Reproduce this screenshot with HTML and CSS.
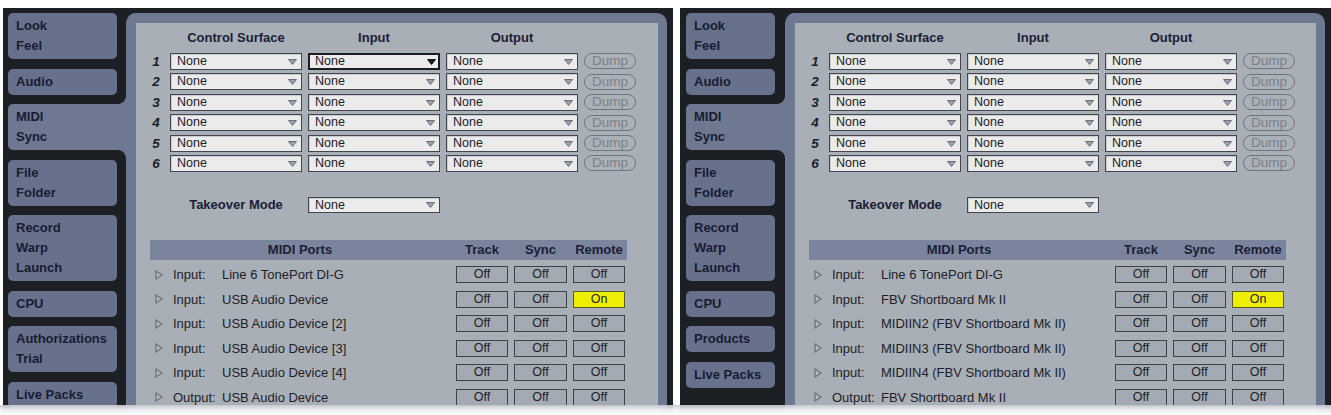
FILE: index.html
```html
<!DOCTYPE html>
<html>
<head>
<meta charset="utf-8">
<link rel="stylesheet" href="styles.css">
</head>
<body>
<div class="page">

  <div class="win win-a">
    <nav class="sidebar">
      <div class="tab"><span>Look</span><span>Feel</span></div>
      <div class="tab"><span>Audio</span></div>
      <div class="tab active"><span>MIDI</span><span>Sync</span></div>
      <div class="tab"><span>File</span><span>Folder</span></div>
      <div class="tab"><span>Record</span><span>Warp</span><span>Launch</span></div>
      <div class="tab"><span>CPU</span></div>
      <div class="tab"><span>Authorizations</span><span>Trial</span></div>
      <div class="tab"><span>Live Packs</span></div>
    </nav>
    <section class="main">
      <div class="matrix">
        <div class="colh c2">Control Surface</div>
        <div class="colh c3">Input</div>
        <div class="colh c4">Output</div>

        <div class="num">1</div>
        <div class="sel">None<svg width="9" height="6" viewBox="0 0 9 6"><polygon points="0.5,0.5 8.5,0.5 4.5,5.5" fill="#9ba1aa" stroke="#6a707a"/></svg></div>
        <div class="sel focus">None<svg width="9" height="6" viewBox="0 0 9 6"><polygon points="0.5,0.5 8.5,0.5 4.5,5.5" fill="#15171b" stroke="#15171b"/></svg></div>
        <div class="sel">None<svg width="9" height="6" viewBox="0 0 9 6"><polygon points="0.5,0.5 8.5,0.5 4.5,5.5" fill="#9ba1aa" stroke="#6a707a"/></svg></div>
        <div class="dump">Dump</div>

        <div class="num">2</div>
        <div class="sel">None<svg width="9" height="6" viewBox="0 0 9 6"><polygon points="0.5,0.5 8.5,0.5 4.5,5.5" fill="#9ba1aa" stroke="#6a707a"/></svg></div>
        <div class="sel">None<svg width="9" height="6" viewBox="0 0 9 6"><polygon points="0.5,0.5 8.5,0.5 4.5,5.5" fill="#9ba1aa" stroke="#6a707a"/></svg></div>
        <div class="sel">None<svg width="9" height="6" viewBox="0 0 9 6"><polygon points="0.5,0.5 8.5,0.5 4.5,5.5" fill="#9ba1aa" stroke="#6a707a"/></svg></div>
        <div class="dump">Dump</div>

        <div class="num">3</div>
        <div class="sel">None<svg width="9" height="6" viewBox="0 0 9 6"><polygon points="0.5,0.5 8.5,0.5 4.5,5.5" fill="#9ba1aa" stroke="#6a707a"/></svg></div>
        <div class="sel">None<svg width="9" height="6" viewBox="0 0 9 6"><polygon points="0.5,0.5 8.5,0.5 4.5,5.5" fill="#9ba1aa" stroke="#6a707a"/></svg></div>
        <div class="sel">None<svg width="9" height="6" viewBox="0 0 9 6"><polygon points="0.5,0.5 8.5,0.5 4.5,5.5" fill="#9ba1aa" stroke="#6a707a"/></svg></div>
        <div class="dump">Dump</div>

        <div class="num">4</div>
        <div class="sel">None<svg width="9" height="6" viewBox="0 0 9 6"><polygon points="0.5,0.5 8.5,0.5 4.5,5.5" fill="#9ba1aa" stroke="#6a707a"/></svg></div>
        <div class="sel">None<svg width="9" height="6" viewBox="0 0 9 6"><polygon points="0.5,0.5 8.5,0.5 4.5,5.5" fill="#9ba1aa" stroke="#6a707a"/></svg></div>
        <div class="sel">None<svg width="9" height="6" viewBox="0 0 9 6"><polygon points="0.5,0.5 8.5,0.5 4.5,5.5" fill="#9ba1aa" stroke="#6a707a"/></svg></div>
        <div class="dump">Dump</div>

        <div class="num">5</div>
        <div class="sel">None<svg width="9" height="6" viewBox="0 0 9 6"><polygon points="0.5,0.5 8.5,0.5 4.5,5.5" fill="#9ba1aa" stroke="#6a707a"/></svg></div>
        <div class="sel">None<svg width="9" height="6" viewBox="0 0 9 6"><polygon points="0.5,0.5 8.5,0.5 4.5,5.5" fill="#9ba1aa" stroke="#6a707a"/></svg></div>
        <div class="sel">None<svg width="9" height="6" viewBox="0 0 9 6"><polygon points="0.5,0.5 8.5,0.5 4.5,5.5" fill="#9ba1aa" stroke="#6a707a"/></svg></div>
        <div class="dump">Dump</div>

        <div class="num">6</div>
        <div class="sel">None<svg width="9" height="6" viewBox="0 0 9 6"><polygon points="0.5,0.5 8.5,0.5 4.5,5.5" fill="#9ba1aa" stroke="#6a707a"/></svg></div>
        <div class="sel">None<svg width="9" height="6" viewBox="0 0 9 6"><polygon points="0.5,0.5 8.5,0.5 4.5,5.5" fill="#9ba1aa" stroke="#6a707a"/></svg></div>
        <div class="sel">None<svg width="9" height="6" viewBox="0 0 9 6"><polygon points="0.5,0.5 8.5,0.5 4.5,5.5" fill="#9ba1aa" stroke="#6a707a"/></svg></div>
        <div class="dump">Dump</div>
      </div>

      <div class="takeover">
        <div class="tlbl">Takeover Mode</div>
        <div class="sel">None<svg width="9" height="6" viewBox="0 0 9 6"><polygon points="0.5,0.5 8.5,0.5 4.5,5.5" fill="#9ba1aa" stroke="#6a707a"/></svg></div>
      </div>

      <div class="ports">
        <div class="ports-head"><div>MIDI Ports</div><div>Track</div><div>Sync</div><div>Remote</div></div>
        <div class="port"><div class="name"><svg class="tri" width="8" height="10" viewBox="0 0 8 10"><polygon points="1,1 7,5 1,9" fill="#b3b8bf" stroke="#6b717a" stroke-width="1.2"/></svg><span class="plbl">Input:</span><span>Line 6 TonePort DI-G</span></div><div class="btn">Off</div><div class="btn">Off</div><div class="btn">Off</div></div>
        <div class="port"><div class="name"><svg class="tri" width="8" height="10" viewBox="0 0 8 10"><polygon points="1,1 7,5 1,9" fill="#b3b8bf" stroke="#6b717a" stroke-width="1.2"/></svg><span class="plbl">Input:</span><span>USB Audio Device</span></div><div class="btn">Off</div><div class="btn">Off</div><div class="btn on">On</div></div>
        <div class="port"><div class="name"><svg class="tri" width="8" height="10" viewBox="0 0 8 10"><polygon points="1,1 7,5 1,9" fill="#b3b8bf" stroke="#6b717a" stroke-width="1.2"/></svg><span class="plbl">Input:</span><span>USB Audio Device [2]</span></div><div class="btn">Off</div><div class="btn">Off</div><div class="btn">Off</div></div>
        <div class="port"><div class="name"><svg class="tri" width="8" height="10" viewBox="0 0 8 10"><polygon points="1,1 7,5 1,9" fill="#b3b8bf" stroke="#6b717a" stroke-width="1.2"/></svg><span class="plbl">Input:</span><span>USB Audio Device [3]</span></div><div class="btn">Off</div><div class="btn">Off</div><div class="btn">Off</div></div>
        <div class="port"><div class="name"><svg class="tri" width="8" height="10" viewBox="0 0 8 10"><polygon points="1,1 7,5 1,9" fill="#b3b8bf" stroke="#6b717a" stroke-width="1.2"/></svg><span class="plbl">Input:</span><span>USB Audio Device [4]</span></div><div class="btn">Off</div><div class="btn">Off</div><div class="btn">Off</div></div>
        <div class="port"><div class="name"><svg class="tri" width="8" height="10" viewBox="0 0 8 10"><polygon points="1,1 7,5 1,9" fill="#b3b8bf" stroke="#6b717a" stroke-width="1.2"/></svg><span class="plbl out">Output:</span><span>USB Audio Device</span></div><div class="btn">Off</div><div class="btn">Off</div><div class="btn">Off</div></div>
      </div>
    </section>
  </div>

  <div class="win win-b">
    <nav class="sidebar">
      <div class="tab"><span>Look</span><span>Feel</span></div>
      <div class="tab"><span>Audio</span></div>
      <div class="tab active"><span>MIDI</span><span>Sync</span></div>
      <div class="tab"><span>File</span><span>Folder</span></div>
      <div class="tab"><span>Record</span><span>Warp</span><span>Launch</span></div>
      <div class="tab"><span>CPU</span></div>
      <div class="tab"><span>Products</span></div>
      <div class="tab"><span>Live Packs</span></div>
    </nav>
    <section class="main">
      <div class="matrix">
        <div class="colh c2">Control Surface</div>
        <div class="colh c3">Input</div>
        <div class="colh c4">Output</div>

        <div class="num">1</div>
        <div class="sel">None<svg width="9" height="6" viewBox="0 0 9 6"><polygon points="0.5,0.5 8.5,0.5 4.5,5.5" fill="#9ba1aa" stroke="#6a707a"/></svg></div>
        <div class="sel">None<svg width="9" height="6" viewBox="0 0 9 6"><polygon points="0.5,0.5 8.5,0.5 4.5,5.5" fill="#9ba1aa" stroke="#6a707a"/></svg></div>
        <div class="sel">None<svg width="9" height="6" viewBox="0 0 9 6"><polygon points="0.5,0.5 8.5,0.5 4.5,5.5" fill="#9ba1aa" stroke="#6a707a"/></svg></div>
        <div class="dump">Dump</div>

        <div class="num">2</div>
        <div class="sel">None<svg width="9" height="6" viewBox="0 0 9 6"><polygon points="0.5,0.5 8.5,0.5 4.5,5.5" fill="#9ba1aa" stroke="#6a707a"/></svg></div>
        <div class="sel">None<svg width="9" height="6" viewBox="0 0 9 6"><polygon points="0.5,0.5 8.5,0.5 4.5,5.5" fill="#9ba1aa" stroke="#6a707a"/></svg></div>
        <div class="sel">None<svg width="9" height="6" viewBox="0 0 9 6"><polygon points="0.5,0.5 8.5,0.5 4.5,5.5" fill="#9ba1aa" stroke="#6a707a"/></svg></div>
        <div class="dump">Dump</div>

        <div class="num">3</div>
        <div class="sel">None<svg width="9" height="6" viewBox="0 0 9 6"><polygon points="0.5,0.5 8.5,0.5 4.5,5.5" fill="#9ba1aa" stroke="#6a707a"/></svg></div>
        <div class="sel">None<svg width="9" height="6" viewBox="0 0 9 6"><polygon points="0.5,0.5 8.5,0.5 4.5,5.5" fill="#9ba1aa" stroke="#6a707a"/></svg></div>
        <div class="sel">None<svg width="9" height="6" viewBox="0 0 9 6"><polygon points="0.5,0.5 8.5,0.5 4.5,5.5" fill="#9ba1aa" stroke="#6a707a"/></svg></div>
        <div class="dump">Dump</div>

        <div class="num">4</div>
        <div class="sel">None<svg width="9" height="6" viewBox="0 0 9 6"><polygon points="0.5,0.5 8.5,0.5 4.5,5.5" fill="#9ba1aa" stroke="#6a707a"/></svg></div>
        <div class="sel">None<svg width="9" height="6" viewBox="0 0 9 6"><polygon points="0.5,0.5 8.5,0.5 4.5,5.5" fill="#9ba1aa" stroke="#6a707a"/></svg></div>
        <div class="sel">None<svg width="9" height="6" viewBox="0 0 9 6"><polygon points="0.5,0.5 8.5,0.5 4.5,5.5" fill="#9ba1aa" stroke="#6a707a"/></svg></div>
        <div class="dump">Dump</div>

        <div class="num">5</div>
        <div class="sel">None<svg width="9" height="6" viewBox="0 0 9 6"><polygon points="0.5,0.5 8.5,0.5 4.5,5.5" fill="#9ba1aa" stroke="#6a707a"/></svg></div>
        <div class="sel">None<svg width="9" height="6" viewBox="0 0 9 6"><polygon points="0.5,0.5 8.5,0.5 4.5,5.5" fill="#9ba1aa" stroke="#6a707a"/></svg></div>
        <div class="sel">None<svg width="9" height="6" viewBox="0 0 9 6"><polygon points="0.5,0.5 8.5,0.5 4.5,5.5" fill="#9ba1aa" stroke="#6a707a"/></svg></div>
        <div class="dump">Dump</div>

        <div class="num">6</div>
        <div class="sel">None<svg width="9" height="6" viewBox="0 0 9 6"><polygon points="0.5,0.5 8.5,0.5 4.5,5.5" fill="#9ba1aa" stroke="#6a707a"/></svg></div>
        <div class="sel">None<svg width="9" height="6" viewBox="0 0 9 6"><polygon points="0.5,0.5 8.5,0.5 4.5,5.5" fill="#9ba1aa" stroke="#6a707a"/></svg></div>
        <div class="sel">None<svg width="9" height="6" viewBox="0 0 9 6"><polygon points="0.5,0.5 8.5,0.5 4.5,5.5" fill="#9ba1aa" stroke="#6a707a"/></svg></div>
        <div class="dump">Dump</div>
      </div>

      <div class="takeover">
        <div class="tlbl">Takeover Mode</div>
        <div class="sel">None<svg width="9" height="6" viewBox="0 0 9 6"><polygon points="0.5,0.5 8.5,0.5 4.5,5.5" fill="#9ba1aa" stroke="#6a707a"/></svg></div>
      </div>

      <div class="ports">
        <div class="ports-head"><div>MIDI Ports</div><div>Track</div><div>Sync</div><div>Remote</div></div>
        <div class="port"><div class="name"><svg class="tri" width="8" height="10" viewBox="0 0 8 10"><polygon points="1,1 7,5 1,9" fill="#b3b8bf" stroke="#6b717a" stroke-width="1.2"/></svg><span class="plbl">Input:</span><span>Line 6 TonePort DI-G</span></div><div class="btn">Off</div><div class="btn">Off</div><div class="btn">Off</div></div>
        <div class="port"><div class="name"><svg class="tri" width="8" height="10" viewBox="0 0 8 10"><polygon points="1,1 7,5 1,9" fill="#b3b8bf" stroke="#6b717a" stroke-width="1.2"/></svg><span class="plbl">Input:</span><span>FBV Shortboard Mk II</span></div><div class="btn">Off</div><div class="btn">Off</div><div class="btn on">On</div></div>
        <div class="port"><div class="name"><svg class="tri" width="8" height="10" viewBox="0 0 8 10"><polygon points="1,1 7,5 1,9" fill="#b3b8bf" stroke="#6b717a" stroke-width="1.2"/></svg><span class="plbl">Input:</span><span>MIDIIN2 (FBV Shortboard Mk II)</span></div><div class="btn">Off</div><div class="btn">Off</div><div class="btn">Off</div></div>
        <div class="port"><div class="name"><svg class="tri" width="8" height="10" viewBox="0 0 8 10"><polygon points="1,1 7,5 1,9" fill="#b3b8bf" stroke="#6b717a" stroke-width="1.2"/></svg><span class="plbl">Input:</span><span>MIDIIN3 (FBV Shortboard Mk II)</span></div><div class="btn">Off</div><div class="btn">Off</div><div class="btn">Off</div></div>
        <div class="port"><div class="name"><svg class="tri" width="8" height="10" viewBox="0 0 8 10"><polygon points="1,1 7,5 1,9" fill="#b3b8bf" stroke="#6b717a" stroke-width="1.2"/></svg><span class="plbl">Input:</span><span>MIDIIN4 (FBV Shortboard Mk II)</span></div><div class="btn">Off</div><div class="btn">Off</div><div class="btn">Off</div></div>
        <div class="port"><div class="name"><svg class="tri" width="8" height="10" viewBox="0 0 8 10"><polygon points="1,1 7,5 1,9" fill="#b3b8bf" stroke="#6b717a" stroke-width="1.2"/></svg><span class="plbl out">Output:</span><span>FBV Shortboard Mk II</span></div><div class="btn">Off</div><div class="btn">Off</div><div class="btn">Off</div></div>
      </div>
    </section>
  </div>

  <div class="fade"></div>
</div>
</body>
</html>
```

FILE: styles.css
```css
* { box-sizing: border-box; }

body {
  margin: 0;
  background: #ffffff;
  font-family: "Liberation Sans", Arial, sans-serif;
}

.page {
  position: relative;
  display: flex;
  gap: 7px;
  height: 415px;
  padding: 8px 0 0 3px;
  overflow: hidden;
}

.win {
  display: flex;
  flex: none;
  height: 407px;
  background: #1c1f23;
  padding: 5px 6px 0 5px;
  overflow: hidden;
}
.win-a { width: 670px; }
.win-b { width: 651px; padding-left: 6px; }

.sidebar {
  display: flex;
  flex-direction: column;
  gap: 9.5px;
  flex: none;
  width: 109px;
  margin-right: 9px;
}
.win-b .sidebar { width: 89px; margin-right: 10px; }

.tab {
  position: relative;
  background: #68718b;
  border-radius: 5px;
  padding: 3px 8px;
  line-height: 20px;
  font-size: 13px;
  font-weight: bold;
  color: #171c33;
}
.tab span { display: block; }

.tab.active {
  background: #6e7891;
  border-radius: 5px 0 0 5px;
  margin-right: -9px;
}
.win-b .tab.active { margin-right: -10px; }

.tab.active::before,
.tab.active::after {
  content: "";
  position: absolute;
  right: 0;
  width: 8px;
  height: 8px;
}
.tab.active::before {
  top: -8px;
  background: radial-gradient(circle at 0 0, #1c1f23 7.5px, #6e7891 8.2px);
}
.tab.active::after {
  bottom: -8px;
  background: radial-gradient(circle at 0 100%, #1c1f23 7.5px, #6e7891 8.2px);
}

.main {
  flex: 1;
  height: 100%;
  background: #a9afb7;
  border: 10px solid #6e7891;
  border-right-width: 9px;
  border-bottom: none;
  border-radius: 10px 10px 0 0;
  padding: 7px 0 0 12px;
}

/* control surface matrix */
.matrix {
  display: grid;
  grid-template-columns: 16px 132px 132px 132px 52px;
  column-gap: 6px;
  row-gap: 3.4px;
  align-items: center;
}
.colh {
  font-size: 13px;
  font-weight: bold;
  line-height: 16px;
  text-align: center;
  color: #1b2035;
  margin-bottom: 3.6px;
}
.c2 { grid-column: 2; }
.c3 { grid-column: 3; }
.c4 { grid-column: 4; }

.num {
  grid-column: 1;
  font-size: 13.5px;
  font-weight: bold;
  font-style: italic;
  text-align: center;
  color: #1b1f2a;
  line-height: 17px;
}

.sel {
  position: relative;
  height: 17px;
  background: #ebebeb;
  border: 1px solid #41454d;
  box-shadow: inset 1px 1px 0 #c9ccd0;
  padding-left: 6px;
  font-size: 12.5px;
  line-height: 15px;
  color: #1d2026;
}
.sel svg {
  position: absolute;
  right: 4px;
  top: 5px;
}
.sel.focus {
  border: 2px solid #1b1d22;
  box-shadow: none;
  padding-left: 5px;
  line-height: 13px;
}
.sel.focus svg { right: 2px; top: 4px; }

.dump {
  height: 16px;
  border: 1px solid #6f757e;
  border-radius: 8px;
  background: #abb1b9;
  font-size: 13.5px;
  line-height: 14px;
  text-align: center;
  color: #7b818a;
}

/* takeover */
.takeover {
  display: grid;
  grid-template-columns: 16px 132px 132px;
  column-gap: 6px;
  align-items: center;
  margin-top: 25px;
}
.tlbl {
  grid-column: 2;
  text-align: center;
  font-size: 13px;
  font-weight: bold;
  color: #1b2035;
}
.takeover .sel { grid-column: 3; height: 16px; line-height: 14px; }
.takeover .sel svg { top: 4px; }

/* midi ports */
.ports {
  width: 477px;
  margin: 27px 0 0 2px;
}
.ports-head,
.port {
  display: grid;
  grid-template-columns: 1fr 52px 53px 52px;
  column-gap: 6px;
  padding-right: 2px;
  align-items: center;
}
.ports-head {
  height: 20px;
  background: #7a849c;
  font-size: 13px;
  font-weight: bold;
  color: #1b2035;
  text-align: center;
  margin-bottom: 2.75px;
}
.port { height: 24.5px; }

.name {
  display: flex;
  align-items: center;
  padding-left: 5px;
  font-size: 13px;
  color: #1d2127;
  white-space: nowrap;
}
.tri { flex: none; margin-right: 10px; }
.plbl { flex: none; width: 49px; }

.btn {
  height: 17px;
  border: 1px solid #3d4148;
  background: #a3aab3;
  font-size: 12.5px;
  line-height: 15px;
  text-align: center;
  color: #1e2127;
}
.btn.on {
  background: #eeee00;
  border-color: #5a5a24;
}

.fade {
  position: absolute;
  left: 0;
  right: 0;
  bottom: 0;
  height: 10px;
  background: linear-gradient(rgba(200, 203, 208, 0.9), rgba(240, 241, 243, 0.97) 50%, #ffffff);
}
```
